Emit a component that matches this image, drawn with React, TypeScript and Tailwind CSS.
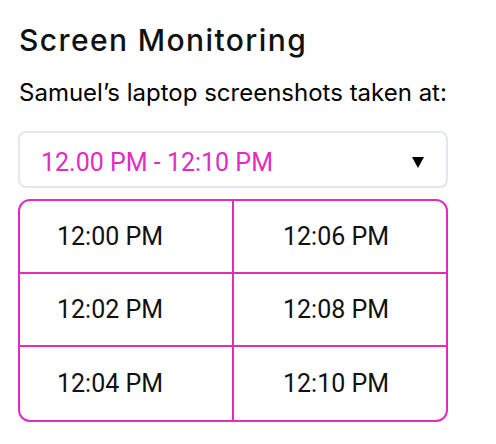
const times = [
  ['12:00 PM', '12:06 PM'],
  ['12:02 PM', '12:08 PM'],
  ['12:04 PM', '12:10 PM'],
];

export default function App() {
  return (
    <div className="w-[496px] h-[444px] bg-white pl-[18px] pt-[20px]">
      <div className="w-[430px]">
        <h1 className="text-[30px] leading-[40px] font-medium tracking-[1.4px] text-[#111] pl-[1px] font-['Inter',sans-serif]">
          Screen Monitoring
        </h1>
        <p className="mt-[17px] text-[24px] leading-[32px] text-black pl-[1px] font-['Inter',sans-serif]">
          Samuel’s laptop screenshots taken at:
        </p>

        <div className="mt-[22px] h-[57px] flex items-center justify-between border-2 border-[#e2e6f0] rounded-lg pt-[6px] pl-[21px] pr-[22px] font-['Roboto',sans-serif]">
          <span className="text-[25px] text-[#e22cbe]">12.00 PM - 12:10 PM</span>
          <svg width="12" height="11" viewBox="0 0 12 11">
            <path d="M0 0H12L6 11Z" fill="#000" />
          </svg>
        </div>

        <div className="mt-[11px] h-[223px] grid grid-cols-[214px_1fr] grid-rows-3 border-2 border-[#e22cbe] rounded-xl overflow-hidden font-['Roboto',sans-serif] text-[25px] text-[#111]">
          {times.map((row, i) =>
            row.map((t, j) => (
              <div
                key={t}
                className={`flex items-center ${j === 0 ? 'pl-[37px] border-r-2' : 'pl-[49px]'} ${
                  i < 2 ? 'border-b-2' : ''
                } border-[#e22cbe]`}
              >
                {t}
              </div>
            ))
          )}
        </div>
      </div>
    </div>
  );
}
